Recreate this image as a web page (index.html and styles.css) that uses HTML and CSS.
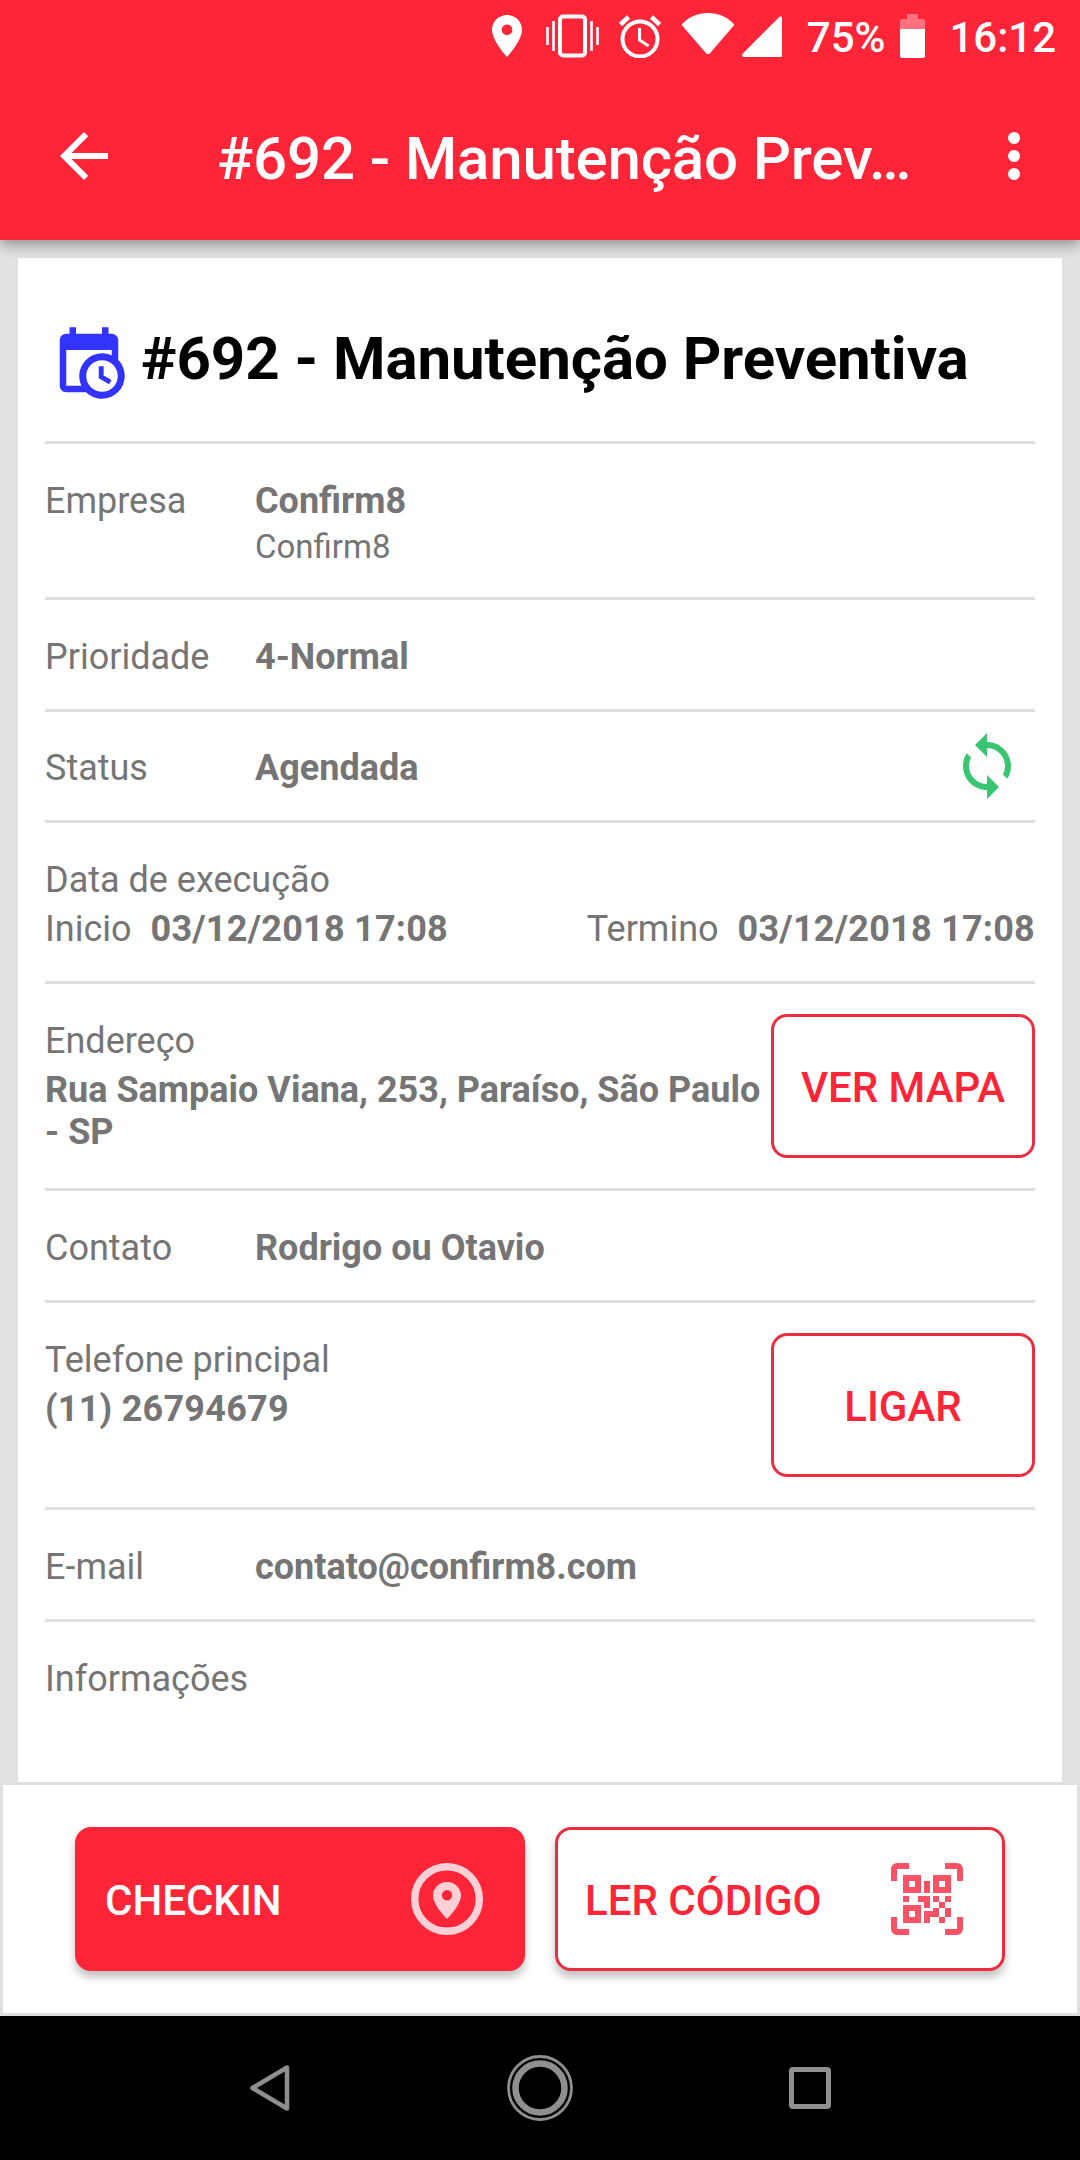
FILE: index.html
```
<!DOCTYPE html>
<html lang="pt-BR">
<head>
  <meta charset="UTF-8">
  <title>#692 - Manutenção Preventiva</title>
  <link rel="stylesheet" href="styles.css">
</head>
<body>

  <header class="top">
    <div class="statusbar">
      <svg class="st-pin" width="30" height="42" viewBox="5 2 14 20" preserveAspectRatio="none"><path d="M12 2C8.13 2 5 5.13 5 9c0 5.25 7 13 7 13s7-7.75 7-13c0-3.87-3.13-7-7-7zm0 9.500a2.500 2.500 0 0 1 0-5 2.500 2.500 0 0 1 0 5z"/></svg>
      <svg class="st-vibrate" width="53" height="44" viewBox="0 0 53 44"><path d="M1.500 13v18M7.500 7v30M45.500 7v30M51.500 13v18" stroke-width="2.600"/><rect x="14" y="2.500" width="25" height="39" rx="3" stroke-width="4"/></svg>
      <svg class="st-alarm" width="42" height="43" viewBox="0 0 42 43"><circle cx="21" cy="24" r="17.500" stroke-width="4"/><path d="M1.500 9.500l8-7.500M40.500 9.500l-8-7.500" stroke-width="4.500"/><path d="M20.500 13v12l9 6" stroke-width="3"/></svg>
      <svg class="st-wifi" width="52" height="42" viewBox="0 0 52 42"><path d="M.6 10.500C7 4 16 0 26 0s19 4 25.400 10.500c.8.8.8 1.500.2 2.300L28.200 40c-1.400 1.700-3 1.700-4.400 0L.4 12.800c-.6-.8-.6-1.500.2-2.300z"/></svg>
      <svg class="st-signal" width="40" height="41" viewBox="0 0 40 41"><path d="M37.500.8C39 0 40 .5 40 2v37.500c0 1-.5 1.500-1.500 1.500H2C0 41-.5 39 .8 37.500z"/></svg>
      <span class="st-percent">75%</span>
      <svg class="st-battery" width="25" height="44" viewBox="0 0 25 44"><path d="M7 0h11v5h5.500L25 6.500V15H0V6.500L1.500 5H7z" opacity=".35"/><path d="M0 15h25v27.500L23.500 44h-22L0 42.500z"/></svg>
      <span class="st-time">16:12</span>
    </div>
    <div class="appbar">
      <svg class="icon" viewBox="0 0 24 24"><path d="M20 11H7.830l5.590-5.590L12 4l-8 8 8 8 1.410-1.410L7.830 13H20v-2z"/></svg>
      <div class="appbar-title">#692 - Manutenção Prev…</div>
      <svg class="icon" viewBox="0 0 24 24"><circle cx="12" cy="6" r="2"/><circle cx="12" cy="12" r="2"/><circle cx="12" cy="18" r="2"/></svg>
    </div>
  </header>

  <main class="content">
    <div class="card">
      <div class="row row-title">
        <svg class="icon-calendar" viewBox="0 0 24 24"><path d="M15,13H16.500V15.820L18.940,17.230L18.190,18.530L15,16.690V13M19,8H5V19H9.670C9.240,18.090 9,17.070 9,16A7,7 0 0,1 16,9C17.070,9 18.090,9.240 19,9.670V8M5,21C3.890,21 3,20.100 3,19V5C3,3.890 3.890,3 5,3H6V1H8V3H16V1H18V3H19A2,2 0 0,1 21,5V11.100C22.240,12.360 23,14.090 23,16A7,7 0 0,1 16,23C14.090,23 12.360,22.240 11.100,21H5M16,11.150A4.850,4.850 0 0,0 11.150,16C11.150,18.680 13.320,20.850 16,20.850A4.850,4.850 0 0,0 20.850,16C20.850,13.320 18.680,11.150 16,11.150Z"/></svg>
        <h1>#692 - Manutenção Preventiva</h1>
      </div>
      <div class="row row-company">
        <div class="label">Empresa</div>
        <div>
          <b>Confirm8</b>
          <div class="sub">Confirm8</div>
        </div>
      </div>
      <div class="row">
        <div class="label">Prioridade</div>
        <b>4-Normal</b>
      </div>
      <div class="row row-status">
        <div class="label">Status</div>
        <b>Agendada</b>
        <svg class="icon-sync" viewBox="0 0 24 24"><path d="M12 4V1L8 5l4 4V6c3.310 0 6 2.690 6 6 0 1.010-.25 1.970-.7 2.800l1.460 1.460C19.540 15.030 20 13.570 20 12c0-4.420-3.580-8-8-8zm0 14c-3.310 0-6-2.690-6-6 0-1.010.25-1.970.7-2.800L5.240 7.740C4.460 8.970 4 10.430 4 12c0 4.420 3.580 8 8 8v3l4-4-4-4v3z"/></svg>
      </div>
      <div class="row row-dates">
        <div class="stack">
          <div>Data de execução</div>
          <div class="dates">
            <div>Inicio <b class="digits">03/12/2018 17:08</b></div>
            <div>Termino <b class="digits">03/12/2018 17:08</b></div>
          </div>
        </div>
      </div>
      <div class="row row-action">
        <div class="stack">
          <div>Endereço</div>
          <b>Rua Sampaio Viana, 253, Paraíso, São Paulo - SP</b>
        </div>
        <button class="btn-small">VER MAPA</button>
      </div>
      <div class="row">
        <div class="label">Contato</div>
        <b>Rodrigo ou Otavio</b>
      </div>
      <div class="row row-action">
        <div class="stack">
          <div>Telefone principal</div>
          <b class="digits">(11) 26794679</b>
        </div>
        <button class="btn-small">LIGAR</button>
      </div>
      <div class="row">
        <div class="label">E-mail</div>
        <b>contato@confirm8.com</b>
      </div>
      <div class="row row-last">
        <div class="label">Informações</div>
      </div>
    </div>
  </main>

  <footer class="actions">
    <button class="btn btn-primary">
      <span>CHECKIN</span>
      <svg viewBox="0 0 72 72"><circle cx="36" cy="36" r="32.300" fill="none" stroke="#ffd0d6" stroke-width="7.400"/><path fill="#ffd0d6" d="M36 19c-7.800 0-14 6-14 13.600C22 42.500 36 56 36 56s14-13.500 14-23.400C50 25 43.800 19 36 19zm0 18.500a5.200 5.200 0 0 1 0-10.400 5.200 5.200 0 0 1 0 10.400z"/></svg>
    </button>
    <button class="btn btn-outline">
      <span>LER CÓDIGO</span>
      <svg viewBox="0 0 12 12" fill="#f95264" fill-rule="evenodd">
        <path d="M0 3V1a1 1 0 0 1 1-1h2v1H1v2zM9 0h2a1 1 0 0 1 1 1v2h-1V1H9zM0 9h1v2h2v1H1a1 1 0 0 1-1-1zM11 9h1v2a1 1 0 0 1-1 1H9v-1h2z"/>
        <path d="M2 2h3v3H2zM3 3v1h1V3zM7 2h3v3H7zM8 3v1h1V3zM2 7h3v3H2zM3 8v1h1V8z"/>
        <path d="M5.500 3h1v2h-1zM2 5.500h1v1H2zM4.500 5.500h2v2h-1v-1h-1zM7 5.500h1v1H7zM9 5.500h1v1H9zM8 6.500h1v1H8zM9 7.500h1V9H9zM7 7.500h1V9H6.500v1h-1V8H7zM8 9h1v1H8z"/>
      </svg>
    </button>
  </footer>

  <nav class="navbar">
    <svg width="42" height="48" viewBox="0 0 42 48"><path d="M38 3.500v41L3.500 24z" stroke-width="4.500" stroke-linejoin="round"/></svg>
    <svg width="66" height="66" viewBox="0 0 66 66"><circle cx="33" cy="33" r="31.500" stroke-width="2.800"/><circle cx="33" cy="33" r="24.500" stroke-width="6.500"/></svg>
    <svg width="42" height="42" viewBox="0 0 42 42"><rect x="2.500" y="2.500" width="37" height="37" rx="1.500" stroke-width="5"/></svg>
  </nav>

</body>
</html>
```

FILE: styles.css
```
* {
  box-sizing: border-box;
}
body {
  margin: 0;
  width: 1080px;
  height: 2160px;
  display: flex;
  flex-direction: column;
  overflow: hidden;
  background-color: #e2e2e0;
  color: #757575;
  font-family: Roboto, sans-serif;
  font-size: 36px;
  line-height: 42px;
}
b {
  font-weight: 700;
}
.digits {
  letter-spacing: 0.24px;
}
svg {
  display: block;
  flex: none;
}

/* top */
.top {
  height: 240px;
  background-color: #ff2539;
  color: #fff;
  fill: #fff;
  box-shadow: 0 4px 14px rgba(0, 0, 0, 0.4);
  z-index: 1;
}
.statusbar {
  height: 72px;
  display: flex;
  justify-content: flex-end;
  align-items: center;
  padding-right: 24px;
  font-size: 42px;
  font-weight: 500;
}
.st-vibrate, .st-alarm {
  fill: none;
  stroke: #fff;
}
.st-vibrate {
  margin-left: 24px;
}
.st-alarm {
  margin-left: 20px;
}
.st-wifi {
  margin: 0 8px 4px 21px;
}
.st-percent {
  margin: 3px 15px 0 25px;
}
.st-time {
  margin: 3px 0 0 24px;
}
.appbar {
  height: 168px;
  display: flex;
  align-items: center;
  padding: 0 30px 0 48px;
}
.icon {
  width: 72px;
  height: 72px;
}
.appbar-title {
  flex: 1;
  margin-left: 97px;
  padding-top: 5px;
  font-size: 60px;
  font-weight: 500;
  line-height: 72px;
  letter-spacing: -0.15px;
}

/* card */
.content {
  height: 1542px;
  padding: 18px 18px 0;
}
.card {
  height: 1524px;
  padding: 0 27px;
  background-color: #fff;
}
.row {
  display: flex;
  height: 112px;
  padding-top: 36px;
  border-bottom: 3px solid #e0e0e0;
}
.label {
  width: 210px;
}
.stack {
  flex: 1;
}
.stack > b, .dates {
  margin-top: 7px;
}
.stack > b {
  display: block;
}
.row-title {
  height: 186px;
  padding: 66px 0 0 5px;
}
.row-title h1 {
  margin: -1px 0 0 13px;
  font-size: 60px;
  font-weight: 700;
  line-height: 72px;
  letter-spacing: -0.05px;
  color: #000;
}
.icon-calendar {
  width: 78px;
  height: 78px;
  fill: #3333ff;
}
.row-company {
  height: 156px;
}
.sub {
  margin-top: 4px;
  font-size: 33px;
}
.row-status {
  height: 111px;
  padding-top: 35px;
}
.icon-sync {
  width: 72px;
  height: 72px;
  margin: -17px 12px 0 auto;
  fill: #38c673;
}
.row-dates {
  height: 161px;
}
.dates {
  display: flex;
  justify-content: space-between;
}
.dates b {
  margin-left: 10px;
}
.row-action {
  height: 207px;
}
.row-last {
  border-bottom: none;
}
.btn-small {
  width: 264px;
  height: 144px;
  margin-top: -6px;
  padding: 2px 0 0;
  background-color: #fff;
  border: 3px solid #ec2d40;
  border-radius: 16px;
  color: #ff2539;
  font-family: inherit;
  font-size: 42px;
  font-weight: 500;
}

/* bottom buttons */
.actions {
  height: 234px;
  display: flex;
  gap: 30px;
  padding: 42px 72px 0;
  background-color: #fff;
  border: 3px solid #e0e0e0;
}
.btn {
  display: flex;
  align-items: center;
  justify-content: space-between;
  width: 450px;
  height: 144px;
  padding: 0 39px 0 27px;
  border: 3px solid #ff2539;
  border-radius: 16px;
  box-shadow: 0 6px 8px rgba(0, 0, 0, 0.25);
  font-family: inherit;
  font-size: 42px;
  font-weight: 500;
}
.btn span {
  padding-top: 2px;
}
.btn svg {
  width: 72px;
  height: 72px;
}
.btn-primary {
  background-color: #ff2539;
  color: #fff;
}
.btn-outline {
  background-color: #fff;
  border-color: #ec2d40;
  color: #ff2539;
}

/* android nav */
.navbar {
  height: 144px;
  display: flex;
  justify-content: space-between;
  align-items: center;
  padding: 0 249px;
  background-color: #000;
  fill: none;
  stroke: #8f8f8f;
}
```
